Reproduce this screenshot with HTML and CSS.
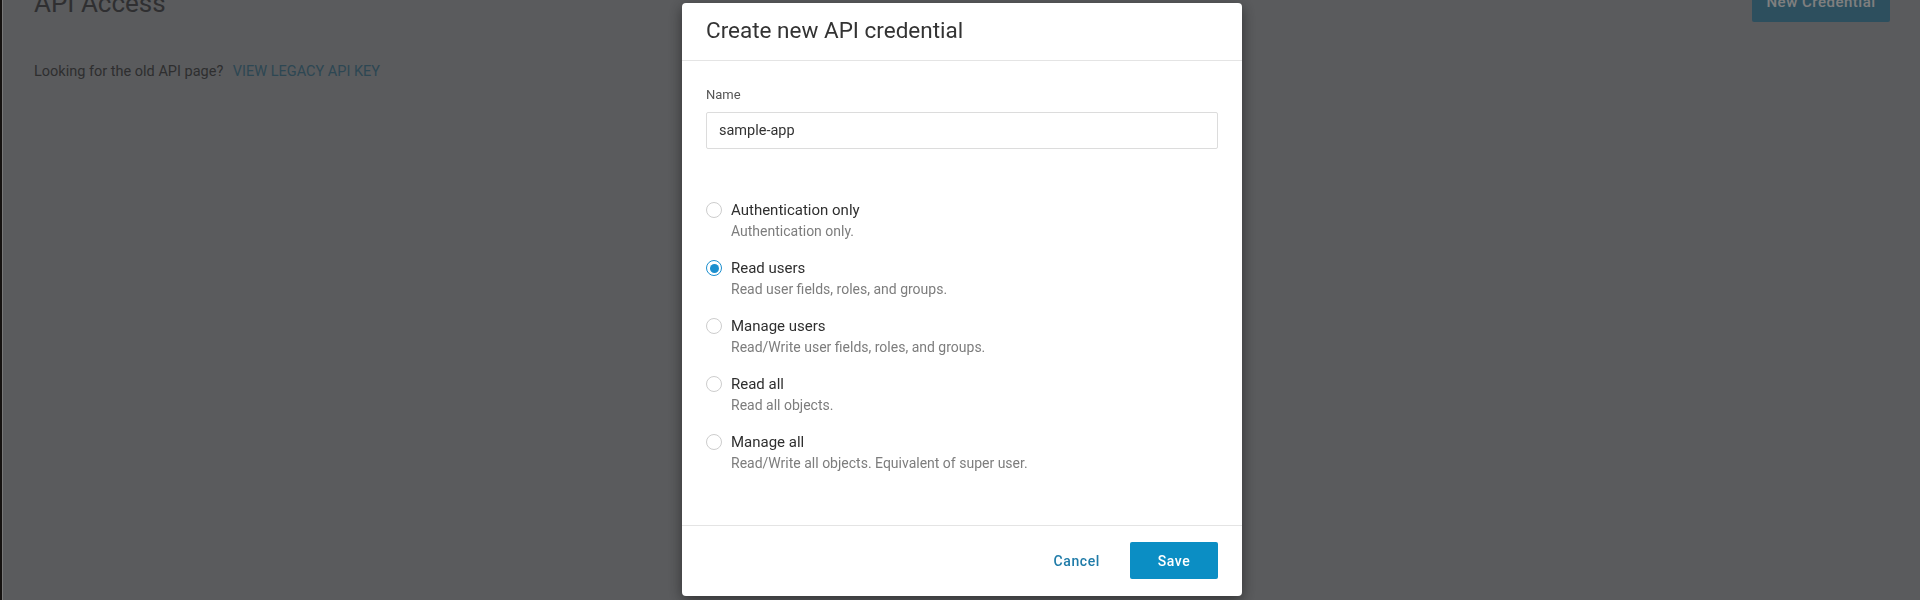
FILE: index.html
```html
<!DOCTYPE html>
<html lang="en">
<head>
<meta charset="utf-8">
<title>API Access</title>
<link rel="stylesheet" href="styles.css">
</head>
<body>
<div class="window">
  <div class="page">
    <header class="page-header">
      <h1 class="page-title">API Access</h1>
      <button class="btn-new" type="button">New Credential</button>
    </header>
    <p class="intro">Looking for the old API page? <a class="legacy-link" href="#">VIEW LEGACY API KEY</a></p>
  </div>
</div>

<div class="backdrop">
  <div class="modal" role="dialog" aria-labelledby="modal-title">
    <div class="modal-header">
      <h2 class="modal-title" id="modal-title">Create new API credential</h2>
    </div>
    <div class="modal-body">
      <label class="field-label" for="name">Name</label>
      <input class="field-input" id="name" type="text" value="sample-app">

      <div class="options">
        <label class="option">
          <span class="radio"></span>
          <span class="option-text">
            <span class="option-title">Authentication only</span>
            <span class="option-desc">Authentication only.</span>
          </span>
        </label>
        <label class="option">
          <span class="radio radio-checked"></span>
          <span class="option-text">
            <span class="option-title">Read users</span>
            <span class="option-desc">Read user fields, roles, and groups.</span>
          </span>
        </label>
        <label class="option">
          <span class="radio"></span>
          <span class="option-text">
            <span class="option-title">Manage users</span>
            <span class="option-desc">Read/Write user fields, roles, and groups.</span>
          </span>
        </label>
        <label class="option">
          <span class="radio"></span>
          <span class="option-text">
            <span class="option-title">Read all</span>
            <span class="option-desc">Read all objects.</span>
          </span>
        </label>
        <label class="option">
          <span class="radio"></span>
          <span class="option-text">
            <span class="option-title">Manage all</span>
            <span class="option-desc">Read/Write all objects. Equivalent of super user.</span>
          </span>
        </label>
      </div>
    </div>
    <div class="modal-footer">
      <button class="btn-cancel" type="button">Cancel</button>
      <button class="btn-save" type="button">Save</button>
    </div>
  </div>
</div>
</body>
</html>
```

FILE: styles.css
```css
html, body {
  margin: 0;
  padding: 0;
  height: 100%;
  overflow: hidden;
}

body {
  background: #2a2420;
  font-family: Roboto, "Noto Sans", "Liberation Sans", sans-serif;
}

.window {
  display: flow-root;
  margin-left: 2px;
  height: 100%;
  background: #b4b6ba;
  border-left: 1px solid #f0f0f0;
}

.page {
  padding: 0 30px 0 31px;
}

.page-header {
  display: flex;
  justify-content: space-between;
  align-items: center;
  margin-top: -18px;
  height: 40px;
}

.page-title {
  margin: 2px 0 0;
  font-size: 26px;
  line-height: 30px;
  font-weight: 400;
  color: #5e5f62;
}

.btn-new {
  height: 40px;
  width: 138px;
  border: 0;
  border-radius: 2px;
  background: #5a9ebc;
  color: #ffffff;
  font-family: inherit;
  font-size: 15px;
  font-weight: 500;
  letter-spacing: 0.5px;
}

.intro {
  margin: 40px 0 0;
  font-size: 14.5px;
  line-height: 20px;
  color: #5c5d5f;
}

.legacy-link {
  margin-left: 6px;
  font-size: 14.5px;
  color: #5a8ea6;
  text-decoration: none;
}

.backdrop {
  position: fixed;
  inset: 0;
  background: rgba(0, 0, 0, 0.5);
  display: flex;
  justify-content: center;
  align-items: flex-start;
  padding: 3px 0 0 4px;
}

.modal {
  width: 560px;
  background: #ffffff;
  border-radius: 4px;
  box-shadow: 0 4px 14px rgba(0, 0, 0, 0.45);
  color: #333333;
}

.modal-header {
  padding: 13px 24px 16px;
  border-bottom: 1px solid #e4e4e4;
}

.modal-title {
  margin: 0;
  font-size: 22.5px;
  line-height: 28px;
  font-weight: 400;
  color: #333333;
}

.modal-body {
  padding: 26px 24px 53px;
}

.field-label {
  display: block;
  font-size: 13px;
  line-height: 16px;
  color: #555555;
  margin-bottom: 9px;
}

.field-input {
  display: block;
  box-sizing: border-box;
  width: 100%;
  height: 37px;
  margin: 0;
  padding: 0 12px;
  border: 1px solid #dcdcdc;
  border-radius: 2px;
  font-family: inherit;
  font-size: 14.5px;
  color: #333333;
  outline: none;
}

.options {
  display: flex;
  flex-direction: column;
  gap: 18px;
  margin-top: 51px;
}

.option {
  display: flex;
  align-items: flex-start;
  gap: 9px;
}

.radio {
  position: relative;
  flex: none;
  box-sizing: border-box;
  width: 16px;
  height: 16px;
  margin-top: 2px;
  border: 1px solid #cdcdcd;
  border-radius: 50%;
  background: #ffffff;
}

.radio-checked {
  border: 1.5px solid #1b8fcf;
}

.radio-checked::after {
  content: "";
  position: absolute;
  left: 50%;
  top: 50%;
  width: 9px;
  height: 9px;
  margin: -4.5px 0 0 -4.5px;
  border-radius: 50%;
  background: #1b8fcf;
}

.option-text {
  display: flex;
  flex-direction: column;
  gap: 2px;
}

.option-title {
  font-size: 15px;
  line-height: 20px;
  color: #2f2f2f;
}

.option-desc {
  font-size: 14px;
  line-height: 18px;
  color: #7d7d7d;
}

.modal-footer {
  display: flex;
  justify-content: flex-end;
  align-items: center;
  gap: 30px;
  padding: 16px 24px 17px;
  border-top: 1px solid #e4e4e4;
}

.btn-cancel {
  border: 0;
  background: transparent;
  padding: 0;
  font-family: inherit;
  font-size: 14px;
  font-weight: 500;
  letter-spacing: 0.6px;
  color: #1f7ba8;
}

.btn-save {
  width: 88px;
  height: 37px;
  border: 0;
  border-radius: 2px;
  background: #0b8ec4;
  color: #ffffff;
  font-family: inherit;
  font-size: 14px;
  font-weight: 500;
  letter-spacing: 0.6px;
}
```
